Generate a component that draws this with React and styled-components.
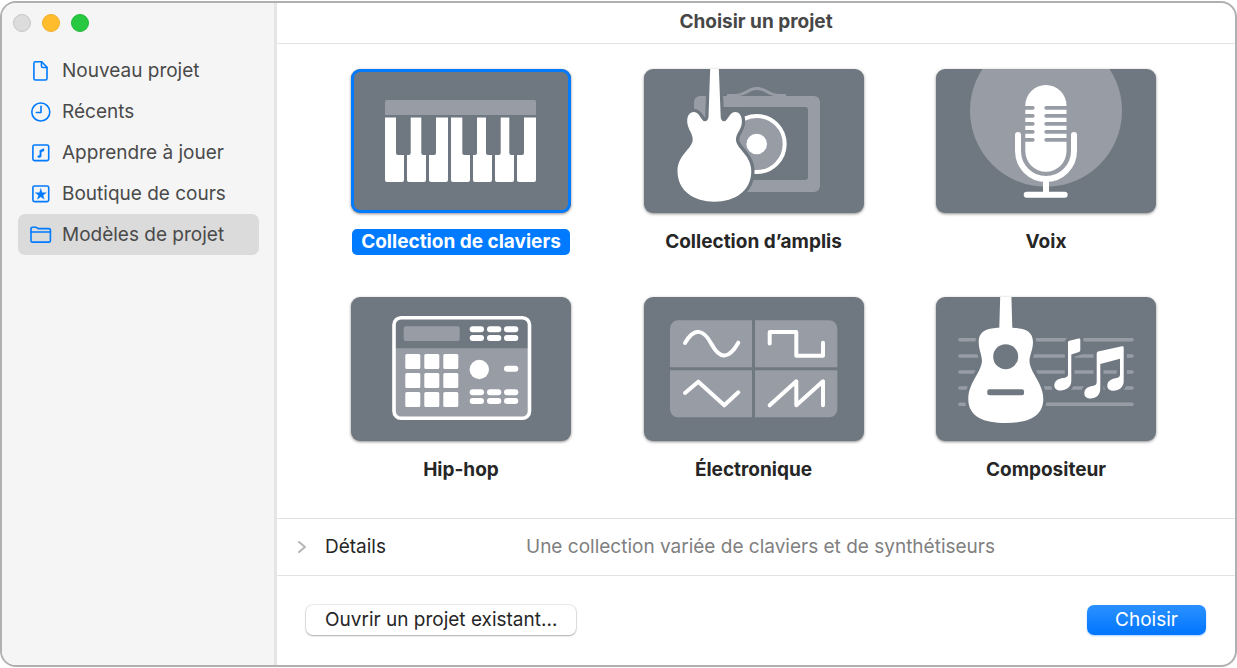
import React, { useState } from "react";
import styled, { createGlobalStyle } from "styled-components";

const SLATE = "#6f7880";
const MIST = "#989ca5";
const BLUE = "#007aff";

const GlobalStyle = createGlobalStyle`
  *, *::before, *::after { box-sizing: border-box; }
  body {
    margin: 0;
    background: #fff;
    font-family: Inter, "Liberation Sans", sans-serif;
    font-size: 19px;
    line-height: 24px;
    color: #262626;
  }
  button { font: inherit; color: inherit; border: 0; padding: 0; background: none; cursor: pointer; }
`;

const Window = styled.div`
  display: flex;
  min-height: calc(100vh - 2px);
  margin: 1px 0;
  border: 2px solid #b0b0b0;
  border-radius: 16px;
  overflow: hidden;
  background: #fff;
`;

const Sidebar = styled.aside`
  flex: 0 0 275px;
  background: #f5f5f5;
  border-right: 3px solid #e5e5e5;
  padding: 11px 15px 0 16px;
`;

const Lights = styled.div`
  display: flex;
  gap: 11px;
  margin: 0 0 18px -5px;
`;

const Light = styled.button`
  width: 18px;
  height: 18px;
  border-radius: 50%;
  background: ${(p) => p.$color};
  border: 1px solid ${(p) => p.$edge};
`;

const Nav = styled.nav`
  display: flex;
  flex-direction: column;
`;

const NavLink = styled.a`
  display: flex;
  align-items: center;
  height: 41px;
  padding-left: 12px;
  gap: 10px;
  border-radius: 7px;
  color: #4a4a4a;
  text-decoration: none;
  white-space: nowrap;
  background: ${(p) => (p.$active ? "#dbdbdb" : "transparent")};
`;

const NavIcon = styled.svg`
  flex: none;
  width: 22px;
  height: 22px;
  fill: none;
  stroke: ${BLUE};
  stroke-width: 1.6;
  stroke-linecap: round;
  stroke-linejoin: round;
`;

const Main = styled.main`
  flex: 1;
  min-width: 0;
  display: flex;
  flex-direction: column;
`;

const Title = styled.h1`
  margin: 0;
  height: 41px;
  padding: 7px 0 0;
  border-bottom: 1px solid #e2e2e2;
  font-size: 19px;
  line-height: 24px;
  font-weight: 700;
  text-align: center;
  color: #474747;
`;

const Gallery = styled.section`
  flex: 1;
  display: grid;
  grid-template-columns: repeat(3, 220px);
  justify-content: space-between;
  align-content: start;
  row-gap: 42px;
  padding: 25px 79px 34px 74px;
`;

const Template = styled.button`
  display: flex;
  flex-direction: column;
  align-items: center;
  gap: 16px;
`;

const Art = styled.svg`
  display: block;
  width: 220px;
  height: 144px;
  border-radius: 9px;
  background: ${SLATE};
  box-shadow: 0 1px 3px rgba(0, 0, 0, 0.45);
`;

const Label = styled.span`
  height: 26px;
  padding: 0 9px;
  border-radius: 5px;
  line-height: 26px;
  font-weight: 700;
  white-space: nowrap;
  background: ${(p) => (p.$selected ? BLUE : "transparent")};
  color: ${(p) => (p.$selected ? "#fff" : "#262626")};
`;

const Details = styled.section`
  display: flex;
  align-items: center;
  height: 57px;
  padding-left: 20px;
  border-top: 1px solid #e2e2e2;
`;

const Disclosure = styled.button`
  display: flex;
  align-items: center;
  gap: 18px;
  width: 229px;
`;

const Chevron = styled.svg`
  width: 10px;
  height: 14px;
  fill: none;
  stroke: #b5b5b5;
  stroke-width: 2;
  stroke-linecap: round;
  stroke-linejoin: round;
`;

const Summary = styled.p`
  margin: 0;
  color: #808080;
`;

const Footer = styled.footer`
  display: flex;
  justify-content: space-between;
  align-items: flex-start;
  height: 90px;
  padding: 29px 29px 0 29px;
  border-top: 1px solid #e2e2e2;
`;

const PushButton = styled.button`
  height: 30px;
  line-height: 28px;
  border-radius: 7px;
  padding: 0 ${(p) => (p.$primary ? 28 : 19)}px;
  color: ${(p) => (p.$primary ? "#fff" : "#262626")};
  background: ${(p) => (p.$primary ? "linear-gradient(#2b91ff, #0075ff)" : "#fff")};
  box-shadow: ${(p) =>
    p.$primary
      ? "0 1px 2px rgba(0, 122, 255, 0.35)"
      : "0 0 0 1px rgba(0, 0, 0, 0.07), 0 1px 2px rgba(0, 0, 0, 0.28)"};
`;

const navIcons = {
  file: (
    <>
      <path d="M5.500 1.800h6.200l5.300 5.400v11.200a1.600 1.600 0 0 1-1.600 1.600H5.500a1.600 1.600 0 0 1-1.600-1.600V3.400a1.600 1.600 0 0 1 1.600-1.600z" />
      <path d="M11.500 2v4.200a1.300 1.300 0 0 0 1.300 1.300H17" />
    </>
  ),
  clock: (
    <>
      <circle cx="10.800" cy="11" r="9" />
      <path d="M11 5.300V11.500H6.300" />
    </>
  ),
  note: (
    <>
      <rect x="2.900" y="3" width="15.800" height="15.600" rx="1.600" />
      <path
        d="M9.800 8.300L14 6.500V9L11.300 10V14C11.300 15.900 7.600 16.400 7.600 14.600C7.600 13.200 9.800 13.700 9.800 12.500z"
        fill={BLUE}
        strokeWidth="0.300"
      />
    </>
  ),
  star: (
    <>
      <rect x="2.900" y="3" width="15.800" height="15.600" rx="1.600" />
      <path d="M10.800 5.700l1.400 4h4.100l-3.300 2.500 1.200 4-3.400-2.400-3.400 2.400 1.200-4-3.300-2.500h4.100z" fill={BLUE} strokeWidth="0.400" />
    </>
  ),
  folder: (
    <>
      <path d="M1 16.700V4.600c0-.9.500-1.400 1.400-1.400h3.300c1.300 0 1.600 1.400 2.900 1.400h10.300c1 0 1.500.6 1.500 1.500v10.600c0 .9-.5 1.400-1.400 1.400H2.500c-1 0-1.500-.5-1.500-1.400z" />
      <path d="M1 8h19.400" />
    </>
  ),
};

const navItems = [
  ["file", "Nouveau projet"],
  ["clock", "Récents"],
  ["note", "Apprendre à jouer"],
  ["star", "Boutique de cours"],
  ["folder", "Modèles de projet"],
];

function KeyboardArt() {
  return (
    <>
      <path d="M34 46V33a2 2 0 0 1 2-2h147a2 2 0 0 1 2 2v13z" fill={MIST} />
      {[34, 56, 78, 100, 122, 144, 166].map((x) => (
        <path key={x} d={`M${x} 48.500h19V111a2 2 0 0 1-2 2h-15a2 2 0 0 1-2-2z`} fill="#fff" />
      ))}
      {[45, 70.3, 111.3, 135, 158.3].map((x) => (
        <path key={x} d={`M${x} 47h14.700v37a2 2 0 0 1-2 2h-10.700a2 2 0 0 1-2-2z`} fill={SLATE} />
      ))}
    </>
  );
}

function AmpArt() {
  return (
    <>
      <path
        fillRule="evenodd"
        fill={MIST}
        d="M56 27h114a6 6 0 0 1 6 6v84a6 6 0 0 1-6 6H56a6 6 0 0 1-6-6V33a6 6 0 0 1 6-6zM65 38a3 3 0 0 0-3 3v67a3 3 0 0 0 3 3h96a3 3 0 0 0 3-3V41a3 3 0 0 0-3-3z"
      />
      <path d="M83 27v-2h8c9 0 13-7 22-7s13 7 22 7h7v2h-11c-8-1-11-6-18-6s-10 5-18 6z" fill={MIST} />
      <circle cx="112.700" cy="75" r="28" fill={MIST} stroke="#fff" strokeWidth="4" />
      <circle cx="112.700" cy="75" r="10.300" fill="#fff" />
      <path
        d="M66.300-4L64.500 48Q64 52 61 52.300C57 52.500 56 43 50 43C44 43 42.500 50 43.500 55C44.500 61 49 65 48.700 71C48 80 33.500 86 33.500 102C33.500 122 50 132.700 70.500 132.700C91 132.700 107.300 122 107.300 102C107.300 86 92.500 80 92 71C91.700 65 97 61 97.700 55C98.500 50 97 43 91 43C85 43 84 52.500 80 52.300Q77 52 76.700 48L74.700-4z"
        fill="#fff"
        stroke={SLATE}
        strokeWidth="6.600"
        paintOrder="stroke"
      />
    </>
  );
}

function MicArt() {
  return (
    <>
      <circle cx="110" cy="41.700" r="76" fill={MIST} />
      <rect x="89.300" y="16" width="41.200" height="86.700" rx="20.600" fill="#fff" />
      {[37, 45, 53, 61, 69].map((y) => (
        <g key={y} fill={MIST}>
          <path d={`M88.800 ${y}h8a1.850 1.850 0 0 1 0 3.700h-8z`} />
          <path d={`M131 ${y}h-20.800a1.850 1.850 0 0 0 0 3.700H131z`} />
        </g>
      ))}
      <g fill="none" stroke="#fff" strokeWidth="6" strokeLinecap="round">
        <path d="M82 66V82A28 28 0 0 0 138 82V66" />
        <path d="M110 110V125M90.700 125.700H128.700" />
      </g>
    </>
  );
}

function SamplerArt() {
  const cols = [118.7, 136, 153];
  return (
    <>
      <rect x="43" y="20.700" width="135.500" height="100.500" rx="7" fill={MIST} />
      <path d="M43 51.300V27.700a7 7 0 0 1 7-7h121.500a7 7 0 0 1 7 7v23.600z" fill={SLATE} />
      <rect x="43" y="20.700" width="135.500" height="100.500" rx="7" fill="none" stroke="#fff" strokeWidth="3.600" />
      <rect x="52.700" y="29.300" width="56" height="14.700" rx="2" fill={MIST} />
      <g fill="#fff">
        {[29.3, 38, 92.3, 101].map((y) =>
          cols.map((x) => <rect key={`${x}-${y}`} x={x} y={y} width="14.300" height="6" rx="3" />)
        )}
        {[57, 76, 95].map((y) =>
          [54.3, 73.3, 92.3].map((x) => (
            <rect key={`${x}-${y}`} x={x} y={y} width="15" height="15" rx="1.500" />
          ))
        )}
        <circle cx="128.300" cy="72.500" r="9.700" />
        <rect x="153" y="68.700" width="14.300" height="6" rx="3" />
      </g>
    </>
  );
}

function WavesArt() {
  return (
    <>
      <g fill={MIST}>
        <path d="M26 70.300V31.300a8 8 0 0 1 8-8h74v47z" />
        <path d="M111 23.300h74.300a8 8 0 0 1 8 8v39H111z" />
        <path d="M26 73.300h82v47H34a8 8 0 0 1-8-8z" />
        <path d="M111 73.300h82.300v39a8 8 0 0 1-8 8H111z" />
      </g>
      <g fill="none" stroke="#fff" strokeWidth="4" strokeLinecap="round" strokeLinejoin="round">
        <path d="M41 46C50 31 59 31 67.500 47S85 62 94.300 45.700" />
        <path d="M125.700 46.500V35H152.300V58.700H179V45.700" />
        <path d="M41 96L54.300 84.700L80.300 108.300L94.300 95.300" />
        <path d="M125.700 108.300L152.300 84.300V108.300L179 84.300V108.300" />
      </g>
    </>
  );
}

function ScoreArt() {
  return (
    <>
      <path
        d="M24 42.700H196M24 59H196M24 75H196M24 91H196M24 107.300H196"
        stroke={MIST}
        strokeWidth="3.600"
        strokeLinecap="round"
      />
      <g fill="#fff" stroke={SLATE} strokeWidth="6.400" paintOrder="stroke">
        <path d="M64.300-4L63.300 30.700C53 31 42.700 33 42.700 45C42.700 53 46 58 46 64C45 76 32.300 86 32.300 102C32.300 120 48 126 69.700 126C91 126 107.300 120 107.300 102C107.300 86 94 76 93.500 64C93.500 58 97 53 97 45C97 33 87 31 76.300 30.700L75.300-4z" />
        <path d="M132 45.500Q132 44 133.500 43.700L142.500 41.500Q144.300 41 144.300 42.500V53Q144.300 54.500 143 55L135.300 57.500V84C135.300 90 130 93.500 124.500 93.500C121 93.500 118.300 91.500 118.300 88.500C118.300 83.500 123 81.500 127 81C130 80.700 132 80 132 77.500z" />
        <path d="M160.700 56.500Q160.700 55 162 54.500L186 49.300Q187.700 49 187.700 50.500V84.500C187.700 90 183 93.700 177.500 93.700C174 93.700 171.300 92 171.300 88.700C171.300 84 175.500 82 179.500 81.300C182.500 80.700 184 80 184 77.500V61.800L164.300 67V91.500C164.300 98 160 101.500 154.500 101.500C151 101.500 148.300 99.500 148.300 96.500C148.300 91.500 152.500 89.500 156.500 89C159.500 88.500 160.700 87.500 160.700 85z" />
      </g>
      <circle cx="69.700" cy="59.700" r="12.500" fill={SLATE} />
      <rect x="51.300" y="92.300" width="36.700" height="6" rx="2" fill={SLATE} />
    </>
  );
}

const templates = [
  { name: "Collection de claviers", art: KeyboardArt },
  { name: "Collection d’amplis", art: AmpArt },
  { name: "Voix", art: MicArt },
  { name: "Hip-hop", art: SamplerArt },
  { name: "Électronique", art: WavesArt },
  { name: "Compositeur", art: ScoreArt },
];

export default function App() {
  const [selected, setSelected] = useState(0);

  return (
    <>
      <GlobalStyle />
      <Window>
        <Sidebar>
          <Lights>
            <Light $color="#dcdcdc" $edge="#c6c6c6" aria-label="Fermer" />
            <Light $color="#ffbd2e" $edge="#f0ae27" aria-label="Réduire" />
            <Light $color="#28c840" $edge="#22b738" aria-label="Agrandir" />
          </Lights>
          <Nav>
            {navItems.map(([icon, text]) => (
              <NavLink key={icon} href="#" $active={icon === "folder"}>
                <NavIcon viewBox="0 0 22 22" aria-hidden="true">{navIcons[icon]}</NavIcon>
                {text}
              </NavLink>
            ))}
          </Nav>
        </Sidebar>
        <Main>
          <Title>Choisir un projet</Title>
          <Gallery>
            {templates.map(({ name, art: Drawing }, i) => (
              <Template key={name} aria-pressed={i === selected} onClick={() => setSelected(i)}>
                <Art viewBox="0 0 220 144" aria-hidden="true">
                  <Drawing />
                  {i === selected && (
                    <rect x="1.500" y="1.500" width="217" height="141" rx="7.500" fill="none" stroke={BLUE} strokeWidth="3" />
                  )}
                </Art>
                <Label $selected={i === selected}>{name}</Label>
              </Template>
            ))}
          </Gallery>
          <Details>
            <Disclosure aria-expanded="false">
              <Chevron viewBox="0 0 10 14" aria-hidden="true">
                <path d="M2 2l6 5-6 5" />
              </Chevron>
              Détails
            </Disclosure>
            <Summary>Une collection variée de claviers et de synthétiseurs</Summary>
          </Details>
          <Footer>
            <PushButton>Ouvrir un projet existant…</PushButton>
            <PushButton $primary>Choisir</PushButton>
          </Footer>
        </Main>
      </Window>
    </>
  );
}
